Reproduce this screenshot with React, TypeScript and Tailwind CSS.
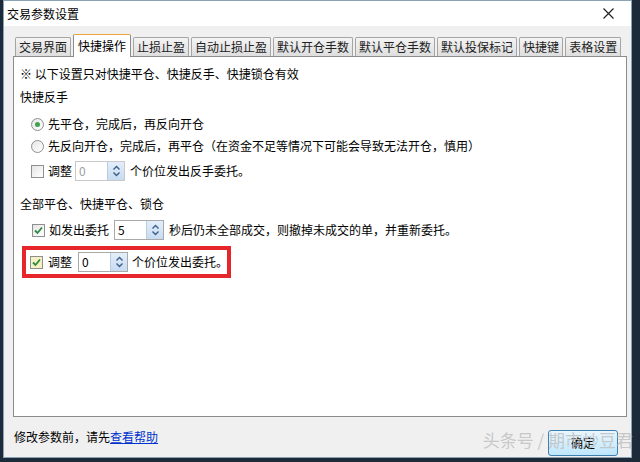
import { ReactNode } from 'react';

const font = { fontFamily: '"Noto Sans CJK SC", "Microsoft YaHei", sans-serif' };

const tabs = ['交易界面', '快捷操作', '止损止盈', '自动止损止盈', '默认开仓手数', '默认平仓手数', '默认投保标记', '快捷键', '表格设置'];

function Check({ checked, hover }: { checked?: boolean; hover?: boolean }) {
  return (
    <span
      className={`flex h-[13px] w-[13px] shrink-0 items-center justify-center border border-[#8f8f8f] ${
        hover ? 'bg-[#f6f1c4]' : 'bg-gradient-to-br from-[#e4e4e4] to-white'
      }`}
    >
      {checked && (
        <svg width="9" height="9" viewBox="0 0 9 9">
          <path d="M1 4.5 L3.5 7 L8 1.5" fill="none" stroke="#2b8a3e" strokeWidth="1.8" />
        </svg>
      )}
    </span>
  );
}

function Radio({ checked }: { checked?: boolean }) {
  return (
    <span className="flex h-[13px] w-[13px] shrink-0 items-center justify-center rounded-full border border-[#8f8f8f] bg-gradient-to-br from-[#e6e6e6] to-white">
      {checked && <span className="h-[5px] w-[5px] rounded-full bg-[#3fa34d]" />}
    </span>
  );
}

function Spin({ value, disabled }: { value: string; disabled?: boolean }) {
  return (
    <span
      className={`flex h-[20px] w-[50px] shrink-0 items-stretch border ${
        disabled ? 'border-[#c9c9c9]' : 'border-[#a9a9a9]'
      } bg-white`}
    >
      <span className={`flex-1 pl-[3px] text-[12px] leading-[18px] ${disabled ? 'text-[#a0a0a0]' : 'text-black'}`}>{value}</span>
      <span className="flex w-[17px] flex-col items-center justify-center border-l border-[#b8cde3] bg-gradient-to-b from-[#e3eefa] to-[#c7dbf1]">
        <svg width="9" height="12" viewBox="0 0 9 12">
          <path d="M1.5 4.5 L4.5 1.5 L7.5 4.5" fill="none" stroke="#3b5d86" strokeWidth="1.4" />
          <path d="M1.5 7.5 L4.5 10.5 L7.5 7.5" fill="none" stroke="#3b5d86" strokeWidth="1.4" />
        </svg>
      </span>
    </span>
  );
}

function Row({ className, children }: { className: string; children: ReactNode }) {
  return <div className={`flex h-[20px] items-center whitespace-nowrap text-[12px] text-black ${className}`}>{children}</div>;
}

export default function App() {
  return (
    <div className="flex h-[462px] w-[640px] bg-[#1c2a3a]" style={font}>
      <div className="ml-[3px] mr-[8px] mb-[4px] flex min-w-0 flex-1 flex-col border border-[#8aa2b5] bg-[#f0f0f0]">
        <div className="flex h-[25px] items-center justify-between bg-white pl-[3px] pr-[17px]">
          <span className="text-[12px] text-black">交易参数设置</span>
          <svg width="11" height="11" viewBox="0 0 11 11">
            <path d="M0.5 0.5 L10.5 10.5 M10.5 0.5 L0.5 10.5" stroke="#222" strokeWidth="1.2" />
          </svg>
        </div>

        <div className="flex items-end gap-[2px] pl-[11px] pt-[8px]">
          {tabs.map((t, i) =>
            i === 1 ? (
              <div
                key={t}
                className="relative z-10 -mb-px flex h-[23px] shrink-0 items-center whitespace-nowrap rounded-t-[2px] border border-b-0 border-[#8c8c8c] border-t-[#e8a33a] bg-white px-[4px] text-[12px] text-black"
              >
                {t}
              </div>
            ) : (
              <div
                key={t}
                className="flex h-[19px] shrink-0 items-center whitespace-nowrap rounded-t-[2px] border border-b-0 border-[#a5a5a5] bg-gradient-to-b from-[#f4f4f4] to-[#dedede] px-[3px] text-[12px] text-[#222]"
              >
                {t}
              </div>
            )
          )}
        </div>

        <div className="ml-[9px] mr-[4px] flex h-[361px] flex-col border border-[#8c8c8c] bg-white pl-[6px]">
          <Row className="mt-[7px] text-[#6b6b6b]">※ 以下设置只对快捷平仓、快捷反手、快捷锁仓有效</Row>
          <Row className="mt-[3px]">快捷反手</Row>
          <Row className="mt-[7px] pl-[11px]">
            <Radio checked />
            <span className="ml-[4px]">先平仓，完成后，再反向开仓</span>
          </Row>
          <Row className="mt-[2px] pl-[11px]">
            <Radio />
            <span className="ml-[4px]">先反向开仓，完成后，再平仓（在资金不足等情况下可能会导致无法开仓，慎用）</span>
          </Row>
          <Row className="mt-[5px] pl-[11px]">
            <Check />
            <span className="ml-[4px]">调整</span>
            <span className="ml-[3px]">
              <Spin value="0" disabled />
            </span>
            <span className="ml-[5px]">个价位发出反手委托。</span>
          </Row>
          <Row className="mt-[13px]">全部平仓、快捷平仓、锁仓</Row>
          <Row className="mt-[6px] pl-[12px]">
            <Check checked />
            <span className="ml-[4px]">如发出委托</span>
            <span className="ml-[5px]">
              <Spin value="5" />
            </span>
            <span className="ml-[5px]">秒后仍未全部成交，则撤掉未成交的单，并重新委托。</span>
          </Row>
          <div className="ml-[2px] mt-[6px] flex h-[32px] w-[209px] shrink-0 items-center whitespace-nowrap border-[4px] border-[#e6262b] pl-[4px] text-[12px] text-black">
            <Check checked hover />
            <span className="ml-[5px]">调整</span>
            <span className="ml-[6px]">
              <Spin value="0" />
            </span>
            <span className="ml-[4px]">个价位发出委托。</span>
          </div>
        </div>

        <div className="relative flex flex-1 items-center justify-between pl-[10px] pr-[13px]">
          <span className="text-[12px] text-black">
            修改参数前，请先<span className="text-[#0033cc] underline">查看帮助</span>
          </span>
          <button className="mt-[12px] h-[26px] w-[70px] rounded-[3px] border border-[#3c7fb1] bg-gradient-to-b from-[#eaf6fd] to-[#bee6fd] text-[12px] text-black">
            确定
          </button>
          <span className="pointer-events-none absolute right-[-2px] top-[10px] whitespace-nowrap text-[17px] text-[#bdbdbd]/80">
            头条号 / 期市炒豆君
          </span>
        </div>
      </div>
    </div>
  );
}
